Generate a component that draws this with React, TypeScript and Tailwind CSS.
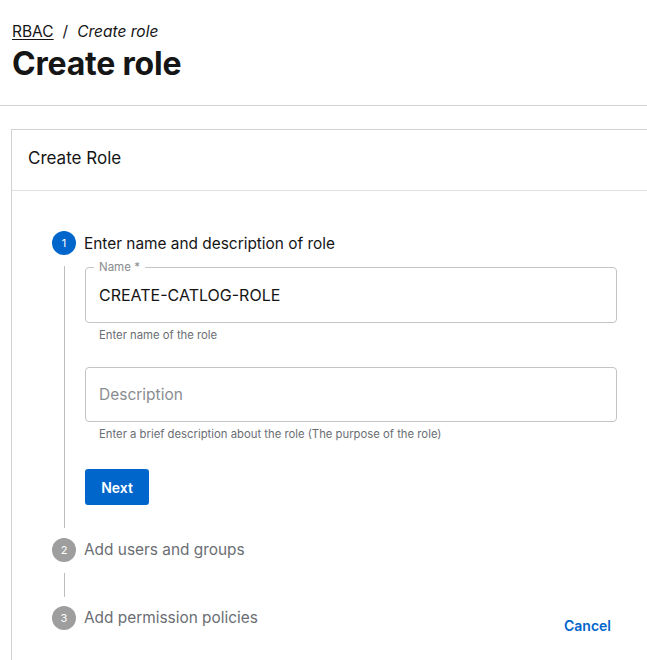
import React from "react";

const font = { fontFamily: "Inter, 'Noto Sans', sans-serif" };

function StepCircle({ n, active }: { n: number; active?: boolean }) {
  return (
    <div
      className={
        "flex h-[24px] w-[24px] shrink-0 items-center justify-center rounded-full text-[11px] text-white " +
        (active ? "bg-[#0066cc]" : "bg-[#9e9e9e]")
      }
    >
      {n}
    </div>
  );
}

export default function App() {
  return (
    <div className="min-h-[660px] bg-white text-[#151515]" style={font}>
      <div className="px-3 pt-[22px] pb-[21px]">
        <div className="flex items-center gap-[9px] text-[15.5px] leading-[20px]">
          <span className="underline underline-offset-2">RBAC</span>
          <span>/</span>
          <span className="italic">Create role</span>
        </div>
        <h1 className="mt-[2px] text-[32px] font-bold leading-[40px] tracking-[-0.2px]">Create role</h1>
      </div>
      <div className="h-px bg-[#d2d2d2]" />
      <div className="pl-[11px] pt-[23px]">
        <div className="w-[680px] border border-[#d2d2d2] bg-white">
          <div className="flex h-[61px] items-center border-b border-[#e0e0e0] pb-[3px] pl-[16px] text-[17px]">
            Create Role
          </div>
          <div className="pl-[40px] pt-[40px] pb-[40px]">
            {/* Step 1 */}
            <div className="flex h-[24px] items-center gap-[8px]">
              <StepCircle n={1} active />
              <div className="pt-[1px] text-[15.4px] leading-[22px]">Enter name and description of role</div>
            </div>
            <div className="flex">
              <div className="ml-[12px] mt-[11px] mb-[10px] w-px bg-[#bdbdbd]" />
              <div className="ml-[20px] w-[532px] pt-[12px] pb-[33px]">
                <div className="relative flex h-[56px] items-center rounded-[4px] border border-[#c4c4c4] px-[13px]">
                  <span className="absolute left-[8px] top-[-8px] bg-white px-[5px] text-[11.5px] leading-[14px] text-[#8a8d90]">
                    Name *
                  </span>
                  <span className="text-[16px] leading-[24px]">CREATE-CATLOG-ROLE</span>
                </div>
                <div className="mt-[4px] pl-[14px] text-[11.3px] leading-[16px] text-[#6a6e73]">
                  Enter name of the role
                </div>
                <div className="mt-[24px] flex h-[55px] items-center rounded-[4px] border border-[#c4c4c4] px-[13px] text-[15.5px] text-[#8a8d90]">
                  Description
                </div>
                <div className="mt-[4px] pl-[14px] text-[11.3px] leading-[16px] text-[#6a6e73]">
                  Enter a brief description about the role (The purpose of the role)
                </div>
                <button className="mt-[27px] flex h-[36px] w-[64px] items-center justify-center rounded-[3px] bg-[#0066cc] text-[14px] font-semibold text-white">
                  Next
                </button>
              </div>
            </div>
            {/* Step 2 */}
            <div className="flex h-[24px] items-center gap-[8px]">
              <StepCircle n={2} />
              <div className="text-[15.4px] leading-[22px] text-[#6a6e73]">Add users and groups</div>
            </div>
            <div className="ml-[12px] mt-[11px] mb-[9px] h-[24px] w-px bg-[#bdbdbd]" />
            {/* Step 3 */}
            <div className="flex w-[559px] items-start justify-between">
              <div className="flex h-[24px] items-center gap-[8px]">
                <StepCircle n={3} />
                <div className="text-[15.4px] leading-[22px] text-[#6a6e73]">Add permission policies</div>
              </div>
              <div className="mt-[10px] text-[14px] font-semibold leading-[20px] text-[#0066cc]">Cancel</div>
            </div>
          </div>
        </div>
      </div>
    </div>
  );
}
